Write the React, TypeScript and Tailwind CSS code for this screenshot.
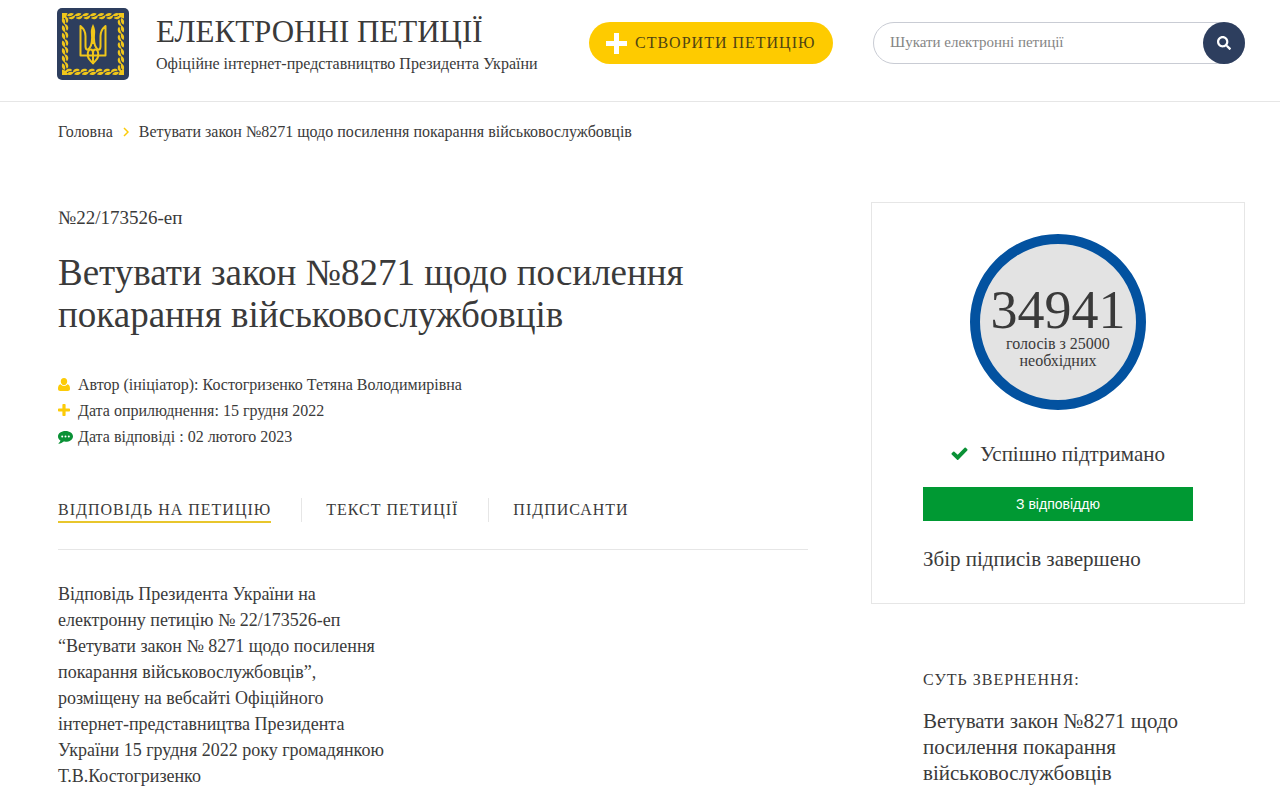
import { FaSearch } from "react-icons/fa";

const SLOTS = [0, 1, 2, 3, 4, 5, 6];

function UserIcon() {
  return (
    <svg viewBox="0 0 12 13" className="-mt-0.5 h-[13px] w-3" fill="#fccb08" aria-hidden="true">
      <path d="M6 0a3.200 3.500 0 0 1 3.200 3.500C9.200 5.500 7.800 7.200 6 7.200S2.800 5.500 2.800 3.500A3.200 3.500 0 0 1 6 0z" />
      <path d="M2.600 6.200C.6 6.500 0 8.500 0 10.700 0 12 .9 13 2.200 13h7.600c1.300 0 2.200-1 2.200-2.300 0-2.200-.6-4.200-2.600-4.500C8.500 7.400 7.300 8 6 8s-2.500-.6-3.400-1.800z" />
    </svg>
  );
}

function PlusIcon() {
  return (
    <svg viewBox="0 0 12 12" className="-mt-0.5 h-3 w-3" fill="#fccb08" aria-hidden="true">
      <path d="M5.200 0h1.600q.8 0 .8.8v3.600h3.600q.8 0 .8.8v1.600q0 .8-.8.8H7.600v3.600q0 .8-.8.8H5.200q-.8 0-.8-.8V7.600H.8q-.8 0-.8-.8V5.200q0-.8.8-.8h3.600V.8q0-.8.8-.8z" />
    </svg>
  );
}

function CommentIcon() {
  return (
    <svg viewBox="0 0 15 13" className="h-[13px] w-[15px]" aria-hidden="true">
      <path
        d="M7.500 0C11.700 0 15 2.400 15 5.400s-3.300 5.300-7.500 5.300c-.6 0-1.200 0-1.800-.1C4.300 11.900 2.500 12.600.9 12.800c-.4 0-.5-.4-.2-.7.8-.7 1.500-1.400 1.700-2.600C.9 8.500 0 7 0 5.400 0 2.400 3.300 0 7.500 0z"
        fill="#0a9136"
      />
      <g fill="#fff">
        <circle cx="4.200" cy="5.400" r="1" />
        <circle cx="7.500" cy="5.400" r="1" />
        <circle cx="10.800" cy="5.400" r="1" />
      </g>
    </svg>
  );
}

function CheckIcon() {
  return (
    <svg viewBox="0 0 17 14" className="h-3.5 w-[17px]" aria-hidden="true">
      <path d="M13.600.8q.6-.6 1.200 0l1.500 1.500q.6.600 0 1.200L7.300 12.700q-.6.600-1.200 0L.7 7.400q-.6-.6 0-1.200l1.500-1.500q.6-.6 1.200 0l3.300 3.100z" fill="#0a9136" />
    </svg>
  );
}

const meta = [
  { icon: <UserIcon />, text: "Автор (ініціатор): Костогризенко Тетяна Володимирівна" },
  { icon: <PlusIcon />, text: "Дата оприлюднення: 15 грудня 2022" },
  { icon: <CommentIcon />, text: "Дата відповіді : 02 лютого 2023" },
];

function Emblem() {
  return (
    <svg viewBox="0 0 72 72" className="h-[72px] w-[72px] shrink-0" role="img" aria-label="Президент України">
      <rect width="72" height="72" rx="5" fill="#2d3e5e" />
      {/* braided frame, one side rotated four times */}
      {[0, 90, 180, 270].map((angle) => (
        <g key={angle} transform={`rotate(${angle} 36 36)`} fill="#f0c61a">
          <path d="M5 5h5.500l-1.500 4.500L5 10.500z" />
          {SLOTS.map((i) => (
            <g key={i} transform={`translate(${10 + i * 7.6} 5)`}>
              <path d="M0 2.600C1.200-.2 4.200-.6 6.800.4 6.200 2.400 4.200 3 2.600 3.200 1.600 3.400.8 3.200 0 2.600z" />
              <path d="M1.200 4.800C3 3.600 5.600 4 8 2c.4 2.200-1 4-3.200 4.200-1.600.2-2.800-.2-3.600-1.400z" />
            </g>
          ))}
        </g>
      ))}
      <g fill="none" stroke="#f0c61a" strokeWidth="2" strokeLinejoin="round">
        <path d="M23.500 18v29.500h7c.6 3.500 3.200 5 5.500 8 2.300-3 4.900-4.500 5.500-8h7V18c-3.600 3-5 6-5 10v10.500c0 2-1 3.200-2.600 3.200-2.800-2.600-3.900-6-3.900-10.700h-2c0 4.700-1.100 8.100-3.900 10.700-1.600 0-2.600-1.200-2.600-3.200V28c0-4-1.400-7-5-10z" />
        <path d="M31 47.500c-.8-3.500.6-6 2.800-6 1.800 0 2.200 2 2.200 4v9M41 47.500c.8-3.500-.6-6-2.800-6-1.800 0-2.200 2-2.200 4M30 47.500h12" />
      </g>
      <path d="M36 16c1.300 2.800 2.200 5 2.200 8L37.500 36h-3L33.800 24c0-3 .9-5.200 2.200-8z" fill="#f0c61a" />
    </svg>
  );
}

function Header() {
  return (
    <header className="flex items-start border-b border-[#e6e6e6] pt-2 pr-[35px] pb-[21px] pl-[57px]">
      <a href="#" className="flex w-[532px] shrink-0 gap-[27px]">
        <Emblem />
        <span className="block whitespace-nowrap">
          <span className="mt-2 block text-[31px] leading-8">ЕЛЕКТРОННІ ПЕТИЦІЇ</span>
          <span className="mt-1 block text-[16px] leading-6">Офіційне інтернет-представництво Президента України</span>
        </span>
      </a>
      <button className="mt-3.5 flex h-[42px] w-[244px] shrink-0 items-center gap-2 rounded-full bg-[#fecb00] pl-[17px] text-[16px] tracking-[1px] whitespace-nowrap text-[#4f4412]">
        <svg viewBox="0 0 21 21" className="h-[21px] w-[21px] shrink-0" aria-hidden="true">
          <path d="M8 0h5v8h8v5h-8v8H8v-8H0V8h8z" fill="#fff" />
        </svg>
        СТВОРИТИ ПЕТИЦІЮ
      </button>
      <form className="mt-3.5 ml-10 flex h-[42px] min-w-0 flex-1 rounded-full border border-[#c9ccd4]">
        <input
          type="search"
          aria-label="Пошук петицій"
          placeholder="Шукати електронні петиції"
          className="min-w-0 flex-1 bg-transparent pb-0.5 pl-4 text-[15px] placeholder:text-[#858585]"
        />
        <button aria-label="Шукати" className="-my-px -mr-px flex h-[42px] w-[42px] shrink-0 items-center justify-center rounded-full bg-[#2d3e5e] text-white">
          <FaSearch className="h-3.5 w-3.5" />
        </button>
      </form>
    </header>
  );
}

function Tabs() {
  return (
    <nav className="mt-12 flex h-[52px] border-b border-[#e6e6e6] text-[16px] leading-6 tracking-[1px] whitespace-nowrap">
      <a href="#answer" className="h-[25px] border-b-2 border-[#e8c62c]">
        ВІДПОВІДЬ НА ПЕТИЦІЮ
      </a>
      <a href="#text" className="ml-[30px] h-6 border-l border-[#e6e6e6] pl-6">
        ТЕКСТ ПЕТИЦІЇ
      </a>
      <a href="#signers" className="ml-[30px] h-6 border-l border-[#e6e6e6] pl-6">
        ПІДПИСАНТИ
      </a>
    </nav>
  );
}

function VotesCard() {
  return (
    <section className="border border-[#e6e6e6] px-[51px] pt-[31px] pb-[30px]">
      <div className="mx-auto flex h-[176px] w-[176px] flex-col items-center rounded-full border-[10px] border-[#0352a0] bg-[#e3e3e3] pt-[41px] text-center whitespace-nowrap">
        <span className="text-[54px] leading-[50px]">34941</span>
        <span className="text-[16px] leading-[17px]">
          голосів з 25000
          <br />
          необхідних
        </span>
      </div>
      <p className="mt-8 flex items-center justify-center gap-3 text-[21px] leading-6">
        <CheckIcon />
        Успішно підтримано
      </p>
      <p className="mt-[21px] bg-[#009933] text-center font-['Liberation_Sans',sans-serif] text-[14px] leading-[34px] text-white">
        З відповіддю
      </p>
      <p className="mt-6 text-[21px] leading-7">Збір підписів завершено</p>
    </section>
  );
}

export default function App() {
  return (
    <div className="min-h-screen overflow-hidden bg-white font-['Georgia','Liberation_Serif',serif] text-[#3a3a3a]">
      <Header />
      <nav className="mt-[18px] flex items-center pl-[58px] text-[16px] leading-6 whitespace-nowrap">
        <a href="#">Головна</a>
        <svg viewBox="0 0 6 10" className="mx-2.5 h-2.5 w-1.5" aria-hidden="true">
          <path d="M1 1l4 4-4 4" fill="none" stroke="#fccb08" strokeWidth="1.500" />
        </svg>
        <span>Ветувати закон №8271 щодо посилення покарання військовослужбовців</span>
      </nav>
      <main className="mt-[58px] flex items-start gap-[63px] pr-[35px] pl-[58px]">
        <article className="min-w-0 flex-1">
          <p className="mt-1 text-[19px] leading-6">№22/173526-еп</p>
          <h1 className="mt-[22px] text-[37px] leading-[42px]">
            Ветувати закон №8271 щодо посилення
            <br />
            покарання військовослужбовців
          </h1>
          <ul className="mt-9 text-[16px] leading-[26px]">
            {meta.map((row) => (
              <li key={row.text} className="flex items-center">
                <span className="w-5">{row.icon}</span>
                {row.text}
              </li>
            ))}
          </ul>
          <Tabs />
          <p className="mt-[31px] text-[18px] leading-[26px] whitespace-nowrap">
            Відповідь Президента України на
            <br />
            електронну петицію № 22/173526-еп
            <br />
            “Ветувати закон № 8271 щодо посилення
            <br />
            покарання військовослужбовців”,
            <br />
            розміщену на вебсайті Офіційного
            <br />
            інтернет-представництва Президента
            <br />
            України 15 грудня 2022 року громадянкою
            <br />
            Т.В.Костогризенко
          </p>
        </article>
        <aside className="w-[374px] shrink-0">
          <VotesCard />
          <section className="mt-16 pl-[52px]">
            <h2 className="text-[16px] leading-6 tracking-[1px]">СУТЬ ЗВЕРНЕННЯ:</h2>
            <p className="mt-4 text-[21px] leading-[26px] whitespace-nowrap">
              Ветувати закон №8271 щодо
              <br />
              посилення покарання
              <br />
              військовослужбовців
            </p>
          </section>
        </aside>
      </main>
    </div>
  );
}
